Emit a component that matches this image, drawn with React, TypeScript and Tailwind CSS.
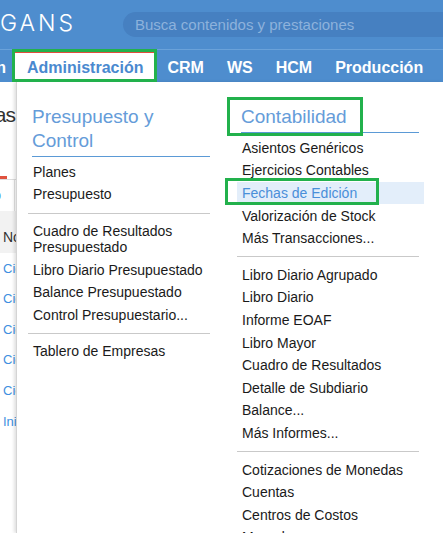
import React from "react";

const leftItems1 = ["Planes", "Presupuesto"];
const leftItems2 = [
  "Cuadro de Resultados Presupuestado",
  "Libro Diario Presupuestado",
  "Balance Presupuestado",
  "Control Presupuestario...",
];
const leftItems3 = ["Tablero de Empresas"];

const rightItems1 = [
  "Asientos Genéricos",
  "Ejercicios Contables",
  "Fechas de Edición",
  "Valorización de Stock",
  "Más Transacciones...",
];
const rightItems2 = [
  "Libro Diario Agrupado",
  "Libro Diario",
  "Informe EOAF",
  "Libro Mayor",
  "Cuadro de Resultados",
  "Detalle de Subdiario",
  "Balance...",
  "Más Informes...",
];
const rightItems3 = ["Cotizaciones de Monedas", "Cuentas", "Centros de Costos", "Monedas"];

function Item({ label, active }: { label: string; active?: boolean }) {
  return (
    <div
      className={
        active
          ? "pl-[5px] py-[3.3px] leading-4 text-[14px] text-[#4a8fd9] bg-[#e3eefa]"
          : "pl-[5px] pr-[5px] py-[3.3px] leading-4 text-[14px] text-[#1a1a1a]"
      }
    >
      {label}
    </div>
  );
}

function Sep() {
  return <div className="mr-[5px] mt-[7px] mb-[6px] h-px bg-[#c9c9c9]" />;
}

function Heading({ children }: { children: React.ReactNode }) {
  return (
    <div className="ml-[4px] mr-[5px] pb-[3px] border-b border-[#5b9ad6] text-[19px] leading-[24px] text-[#659cd9]">
      {children}
    </div>
  );
}

export default function App() {
  return (
    <div className="relative w-[443px] h-[533px] overflow-hidden bg-white font-['Liberation_Sans',Arial,sans-serif]">
      {/* Top bar */}
      <div className="h-[49px] bg-[#4e8dce] flex items-center">
        <div className="w-[123px] h-full flex items-center pb-[2px]">
          <span className="font-['Inter',sans-serif] font-light text-[23px] tracking-[3px] text-white leading-none">
            GANS
          </span>
        </div>
        <div className="flex-1 h-[25px] rounded-l-full bg-[#4680c1] flex items-center pl-[12px]">
          <span className="text-[15px] text-[#8db2dc] whitespace-nowrap leading-none">
            Busca contenidos y prestaciones
          </span>
        </div>
      </div>
      <div className="h-px bg-[#6aa2da]" />
      {/* Nav bar */}
      <div className="h-[32px] bg-[#4e8dce] flex items-stretch text-[16px] font-bold text-white whitespace-nowrap">
        <div className="w-[13px] overflow-hidden flex justify-end pt-[3px] items-center">
          <span className="pr-[7px]">Gestión</span>
        </div>
        <div className="w-[143px] bg-white border-t-[3px] border-[#e14d3c] flex items-center pl-[14px] text-[#4a89cf]">
          Administración
        </div>
        <div className="px-[11.5px] pt-[3px] flex items-center">CRM</div>
        <div className="px-[11.5px] pt-[3px] flex items-center">WS</div>
        <div className="px-[11.5px] pt-[3px] flex items-center">HCM</div>
        <div className="px-[11.5px] pt-[3px] flex items-center">Producción</div>
      </div>
      {/* Body */}
      <div className="h-[451px] flex">
        {/* underlying page strip */}
        <div className="w-[16px] shrink-0 overflow-hidden flex flex-col">
          <div className="pt-[20px] h-[94px] flex justify-end pr-[1px] text-[21px] leading-[26px] tracking-[-1px] text-[#333] whitespace-nowrap">
            <span>Empresas</span>
          </div>
          <div className="h-[3px] w-[7px] bg-[#e0523f]" />
          <div className="h-px bg-[#dddddd]" />
          <div className="h-[31px] flex items-center justify-end pr-[13px] text-[14px] text-[#3f8fe0] whitespace-nowrap border-r border-[#e2e2e2] mr-[1px]">
            <span>Nuevo</span>
          </div>
          <div className="h-[42px] bg-[#f2f2f2] pl-[3px] pt-[18px] text-[14px] leading-4 text-[#333] whitespace-nowrap">
            Nombre
          </div>
          {["Cierre", "Cierre", "Cierre", "Cierre", "Cierre", "Inicio"].map((t, i) => (
            <div
              key={i}
              className="h-[30.6px] flex items-center pl-[3px] text-[13px] text-[#3f8fe0] whitespace-nowrap"
            >
              {t}
            </div>
          ))}
        </div>
        {/* dropdown panel */}
        <div className="flex-1 bg-white border-l border-[#d4d4d4] shadow-[-2px_0_3px_rgba(0,0,0,0.12)] pl-[11px] pt-[23px] flex gap-[22px]">
          <div className="w-[187px] shrink-0">
            <Heading>
              Presupuesto y
              <br />
              Control
            </Heading>
            <div className="mt-[3.5px]">
              {leftItems1.map((t) => (
                <Item key={t} label={t} />
              ))}
              <Sep />
              {leftItems2.map((t) => (
                <Item key={t} label={t} />
              ))}
              <Sep />
              {leftItems3.map((t) => (
                <Item key={t} label={t} />
              ))}
            </div>
          </div>
          <div className="w-[187px] shrink-0">
            <Heading>Contabilidad</Heading>
            <div className="mt-[3.5px]">
              {rightItems1.map((t) => (
                <Item key={t} label={t} active={t === "Fechas de Edición"} />
              ))}
              <Sep />
              {rightItems2.map((t) => (
                <Item key={t} label={t} />
              ))}
              <Sep />
              {rightItems3.map((t) => (
                <Item key={t} label={t} />
              ))}
            </div>
          </div>
        </div>
      </div>
      {/* annotation boxes */}
      <div className="absolute left-[12px] top-[49px] w-[145px] h-[33px] border-[3px] border-[#22b14c]" />
      <div className="absolute left-[227px] top-[97px] w-[136px] h-[39px] border-[3px] border-[#22b14c]" />
      <div className="absolute left-[225px] top-[178px] w-[154px] h-[27px] border-[3px] border-[#22b14c]" />
    </div>
  );
}
